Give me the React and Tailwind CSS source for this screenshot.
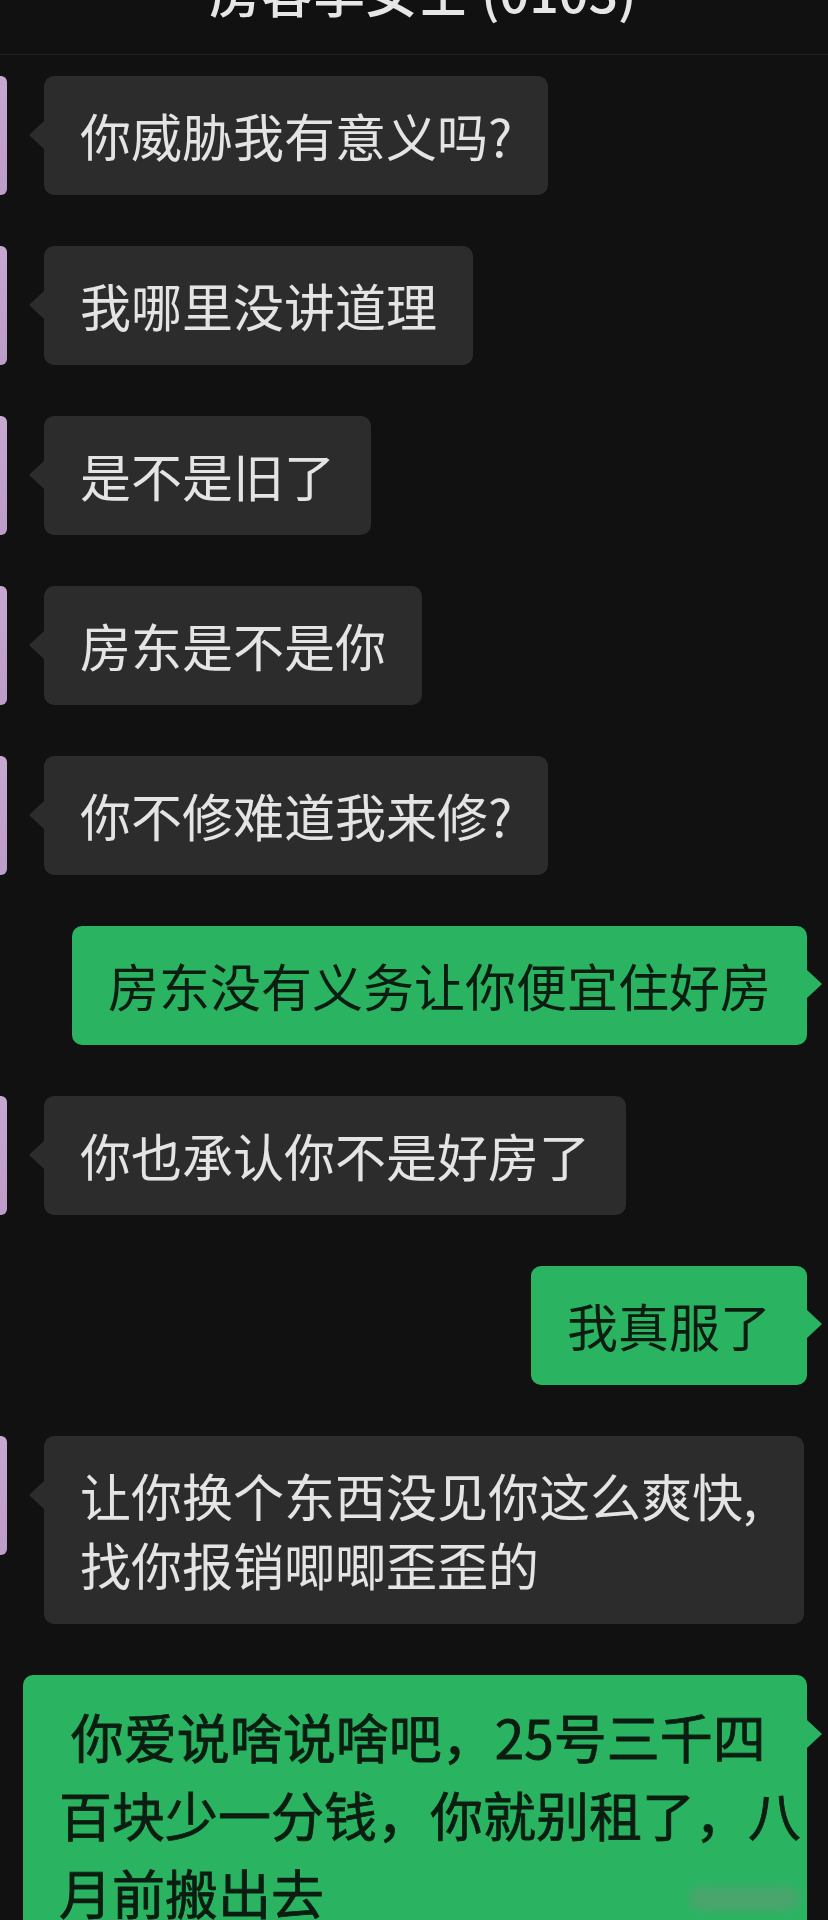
const messages = [
  { side: "left", lines: ["你威胁我有意义吗?"] },
  { side: "left", lines: ["我哪里没讲道理"] },
  { side: "left", lines: ["是不是旧了"] },
  { side: "left", lines: ["房东是不是你"] },
  { side: "left", lines: ["你不修难道我来修?"] },
  { side: "right", lines: ["房东没有义务让你便宜住好房"] },
  { side: "left", lines: ["你也承认你不是好房了"] },
  { side: "right", lines: ["我真服了"] },
  { side: "left", lines: ["让你换个东西没见你这么爽快,", "找你报销唧唧歪歪的"], wide: true },
];

function LeftRow({ lines, wide }) {
  return (
    <div className="flex items-start">
      <div className="w-[7px] h-[119px] rounded-r-[6px] bg-gradient-to-b from-[#c7a8d0] to-[#bc9cc8]" />
      <div
        className={`relative ml-[37px] rounded-[10px] bg-[#2c2c2c] pl-[36px] py-[25px] text-[51px] leading-[69px] text-[#e4e4e4] whitespace-nowrap ${
          wide ? "pr-[47px]" : "pr-[36px]"
        }`}
      >
        <span className="absolute left-[-15px] top-[45px] w-0 h-0 border-y-[14px] border-y-transparent border-r-[15px] border-r-[#2c2c2c]" />
        {lines.map((l, i) => (
          <div key={i}>{l}</div>
        ))}
      </div>
    </div>
  );
}

function RightRow({ lines }) {
  return (
    <div className="flex justify-end pr-[21px]">
      <div className="relative rounded-[10px] bg-[#2ab462] px-[36px] py-[25px] text-[51px] leading-[69px] text-[#0b1d10] whitespace-nowrap">
        <span className="absolute right-[-15px] top-[44px] w-0 h-0 border-y-[14px] border-y-transparent border-l-[15px] border-l-[#2ab462]" />
        {lines.map((l, i) => (
          <div key={i}>{l}</div>
        ))}
      </div>
    </div>
  );
}

export default function App() {
  return (
    <div className="relative w-[828px] h-[1920px] overflow-hidden bg-[#111111] font-['Noto_Sans_CJK_SC',sans-serif]">
      <div className="h-[55px] border-b border-[#1e1e1e] flex justify-center overflow-hidden pl-[18px]">
        <div className="-mt-[35px] text-[52px] leading-[52px] font-medium text-[#e6e6e6] whitespace-nowrap">
          房客李女士 (0103)
        </div>
      </div>

      <div className="flex flex-col gap-[51px] pt-[21px]">
        {messages.map((m, i) =>
          m.side === "left" ? (
            <LeftRow key={i} lines={m.lines} wide={m.wide} />
          ) : (
            <RightRow key={i} lines={m.lines} />
          )
        )}

        <div className="flex justify-end pr-[21px]">
          <div className="relative w-[784px] rounded-[10px] bg-[#2ab462] pl-[36px] pt-[22px] pb-[40px] text-[53px] leading-[78px] text-[#0b1d10] whitespace-nowrap [-webkit-text-stroke:0.8px_#0b1d10]">
            <span className="absolute right-[-15px] top-[45px] w-0 h-0 border-y-[14px] border-y-transparent border-l-[15px] border-l-[#2ab462]" />
            <div>&nbsp;你爱说啥说啥吧，25号三千四</div>
            <div>百块少一分钱，你就别租了，八</div>
            <div>月前搬出去</div>
            <div className="absolute right-[8px] top-[212px] w-[110px] h-[24px] rounded-full bg-[#5f9a73] opacity-60 blur-[4px]" />
          </div>
        </div>
      </div>
    </div>
  );
}
